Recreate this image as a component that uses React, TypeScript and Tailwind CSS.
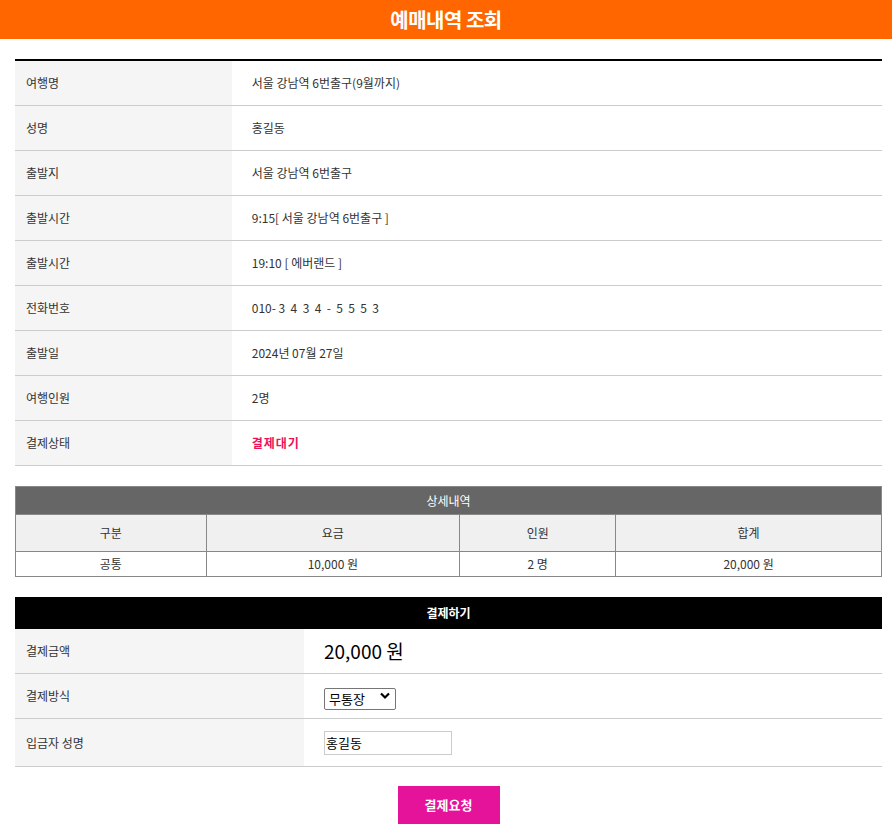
import { useState } from 'react'

const font = "font-['Noto_Sans_CJK_KR','Noto_Sans',sans-serif]"

const infoRows: { label: string; value: string; highlight?: boolean }[] = [
  { label: '여행명', value: '서울 강남역 6번출구(9월까지)' },
  { label: '성명', value: '홍길동' },
  { label: '출발지', value: '서울 강남역 6번출구' },
  { label: '출발시간', value: '9:15[ 서울 강남역 6번출구 ]' },
  { label: '출발시간', value: '19:10 [ 에버랜드 ]' },
  { label: '전화번호', value: '010- 3  4  3  4  -  5  5  5  3' },
  { label: '출발일', value: '2024년 07월 27일' },
  { label: '여행인원', value: '2명' },
  { label: '결제상태', value: '결제대기', highlight: true },
]

function InfoRow({ label, value, highlight }: { label: string; value: string; highlight?: boolean }) {
  return (
    <div className="flex h-[45px] border-b border-[#ccc]">
      <div className="w-1/4 bg-[#f5f5f5] pl-[11px] flex items-center text-[12px] text-[#333]">{label}</div>
      <div
        className={
          highlight
            ? 'flex-1 pl-[20px] flex items-center text-[12px] font-bold text-[#f0105a] tracking-[1px]'
            : 'flex-1 pl-[20px] flex items-center text-[12px] text-[#333] whitespace-pre'
        }
      >
        {value}
      </div>
    </div>
  )
}

export default function App() {
  const [method, setMethod] = useState('무통장')
  const [payer, setPayer] = useState('홍길동')

  return (
    <div className={`${font} bg-white`}>
      <div className="h-[39px] bg-[#ff6600] flex items-center justify-center">
        <h1 className="text-white text-[20px] font-bold tracking-[-0.5px]">예매내역 조회</h1>
      </div>

      <div className="pl-[15px] pr-[10px] pt-[20px]">
        {/* 예약 정보 */}
        <div className="border-t-2 border-black">
          {infoRows.map((row, i) => (
            <InfoRow key={i} {...row} />
          ))}
        </div>

        {/* 상세내역 */}
        <table className="w-full mt-[20px] border-collapse border border-[#888] text-[12px] text-[#333] table-fixed">
          <colgroup>
            <col className="w-[22%]" />
            <col className="w-[29.3%]" />
            <col className="w-[18%]" />
            <col />
          </colgroup>
          <thead>
            <tr>
              <th colSpan={4} className="h-[28px] bg-[#666] text-white font-normal border border-[#888]">
                상세내역
              </th>
            </tr>
            <tr className="bg-[#f0f0f0]">
              <th className="h-[37px] font-normal border border-[#888]">구분</th>
              <th className="font-normal border border-[#888]">요금</th>
              <th className="font-normal border border-[#888]">인원</th>
              <th className="font-normal border border-[#888]">합계</th>
            </tr>
          </thead>
          <tbody>
            <tr className="text-center">
              <td className="h-[25px] border border-[#888]">공통</td>
              <td className="border border-[#888]">10,000 원</td>
              <td className="border border-[#888]">2 명</td>
              <td className="border border-[#888]">20,000 원</td>
            </tr>
          </tbody>
        </table>

        {/* 결제하기 */}
        <div className="mt-[20px]">
          <div className="h-[32px] bg-black text-white text-[12px] font-bold flex items-center justify-center">결제하기</div>
          <div className="flex h-[45px] border-b border-[#ccc]">
            <div className="w-1/3 bg-[#f5f5f5] pl-[11px] flex items-center text-[12px] text-[#333]">결제금액</div>
            <div className="flex-1 pl-[20px] flex items-center text-[19px] text-black">20,000 원</div>
          </div>
          <div className="flex h-[45px] border-b border-[#ccc]">
            <div className="w-1/3 bg-[#f5f5f5] pl-[11px] flex items-center text-[12px] text-[#333]">결제방식</div>
            <div className="flex-1 pl-[20px] flex items-center">
              <div className="relative w-[72px] h-[22px]">
                <select
                  value={method}
                  onChange={(e) => setMethod(e.target.value)}
                  className="appearance-none w-full h-full border border-[#767676] rounded-[2px] pl-[4px] text-[13px] text-black bg-white"
                >
                  <option>무통장</option>
                  <option>신용카드</option>
                </select>
                <svg
                  className="absolute right-[6px] top-[7px] pointer-events-none"
                  width="10"
                  height="8"
                  viewBox="0 0 10 8"
                >
                  <path d="M1 1.5 L5 5.5 L9 1.5" fill="none" stroke="#000" strokeWidth="2.2" />
                </svg>
              </div>
            </div>
          </div>
          <div className="flex h-[48px] border-b border-[#ccc]">
            <div className="w-1/3 bg-[#f5f5f5] pl-[11px] flex items-center text-[12px] text-[#333]">입금자 성명</div>
            <div className="flex-1 pl-[20px] flex items-center">
              <input
                value={payer}
                onChange={(e) => setPayer(e.target.value)}
                className="w-[128px] h-[24px] border border-[#ccc] px-[1px] text-[13px] text-black outline-none"
              />
            </div>
          </div>
        </div>

        <div className="flex justify-center pt-[19px]">
          <button className="w-[102px] h-[38px] bg-[#e5129a] text-white text-[13px] font-bold">결제요청</button>
        </div>
      </div>
    </div>
  )
}
